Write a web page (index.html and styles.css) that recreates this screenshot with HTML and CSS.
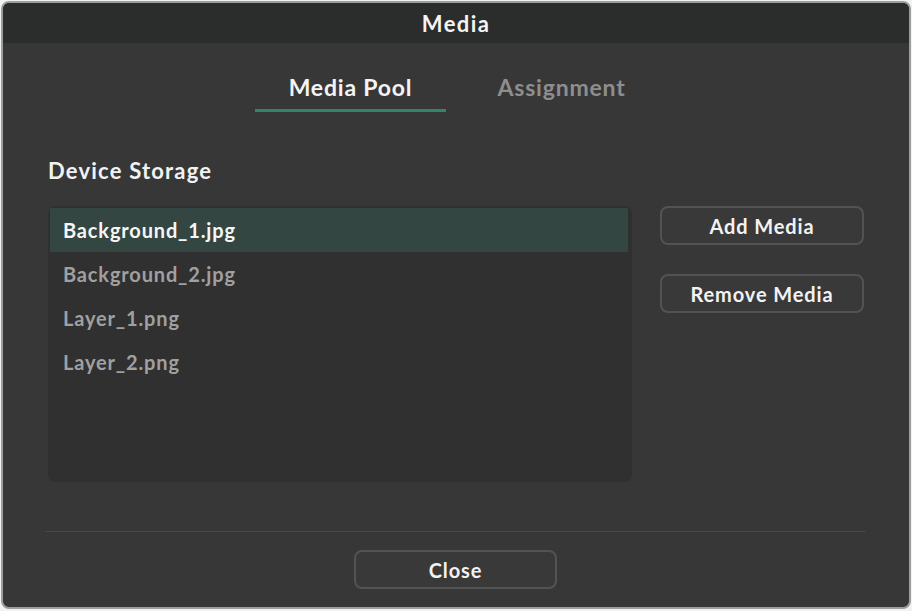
FILE: index.html
```html
<!DOCTYPE html>
<html lang="en">
<head>
<meta charset="UTF-8" />
<title>Media</title>
<link rel="stylesheet" href="styles.css">
</head>
<body>
  <div class="window">
    <div class="title-bar">Media</div>

    <div class="content">
      <div class="tabs">
        <div class="tab active">Media Pool</div>
        <div class="tab">Assignment</div>
      </div>

      <h2 class="section-title">Device Storage</h2>

      <div class="storage">
        <ul class="file-list">
          <li class="file selected">Background_1.jpg</li>
          <li class="file">Background_2.jpg</li>
          <li class="file">Layer_1.png</li>
          <li class="file">Layer_2.png</li>
        </ul>
        <div class="actions">
          <button class="btn">Add Media</button>
          <button class="btn">Remove Media</button>
        </div>
      </div>
    </div>

    <div class="footer">
      <button class="btn close-btn">Close</button>
    </div>
  </div>
</body>
</html>
```

FILE: styles.css
```css
body {
  margin: 0;
  padding: 1px 1px 0;
  background: #f2f2f2;
  font-family: Lato, 'Open Sans', sans-serif;
}

.window {
  height: 608px;
  box-sizing: border-box;
  border: 2px solid #9d9d9d;
  border-radius: 8px;
  background: #373737;
  display: flex;
  flex-direction: column;
  overflow: hidden;
}

/* Title bar */
.title-bar {
  height: 40px;
  flex-shrink: 0;
  background: #2b2c2c;
  color: #f4f4f4;
  font-size: 22px;
  font-weight: 700;
  letter-spacing: 1.4px;
  display: flex;
  justify-content: center;
  align-items: center;
}

.content {
  flex: 1;
  padding: 0 45px;
}

/* Tabs */
.tabs {
  display: flex;
  justify-content: center;
  gap: 20px;
  margin-top: 30px;
}

.tab {
  width: 191px;
  text-align: center;
  font-size: 23px;
  font-weight: 700;
  letter-spacing: 0.8px;
  line-height: 28px;
  color: #8e8e8e;
  padding-bottom: 8px;
  border-bottom: 3px solid transparent;
}

.tab.active {
  color: #f4f4f4;
  border-bottom-color: #348466;
}

.section-title {
  margin: 46px 0 22px;
  font-size: 22px;
  line-height: 26px;
  letter-spacing: 1.2px;
  font-weight: 700;
  color: #f2f2f2;
}

/* Storage area */
.storage {
  display: grid;
  grid-template-columns: 1fr 204px;
  gap: 28px;
}

.file-list {
  list-style: none;
  margin: 0;
  padding: 2px 4px 2px 2px;
  height: 276px;
  box-sizing: border-box;
  background: #303030;
  border-radius: 8px;
}

.file {
  height: 44px;
  display: flex;
  align-items: center;
  padding-left: 13px;
  font-size: 20px;
  font-weight: 700;
  letter-spacing: 0.85px;
  color: #a0a0a0;
}

.file.selected {
  background: #334641;
  color: #f6f6f6;
}

.actions {
  display: flex;
  flex-direction: column;
  gap: 29px;
}

.btn {
  height: 39px;
  box-sizing: border-box;
  background: #393939;
  border: 2px solid #535353;
  border-radius: 8px;
  color: #f2f2f2;
  font-family: inherit;
  font-size: 20px;
  font-weight: 700;
  letter-spacing: 0.9px;
  cursor: pointer;
}

/* Footer */
.footer {
  margin: 0 43px 0 42px;
  padding: 18px 0 18px;
  border-top: 1px solid #474747;
  display: flex;
  justify-content: center;
}

.close-btn {
  width: 203px;
}
```
